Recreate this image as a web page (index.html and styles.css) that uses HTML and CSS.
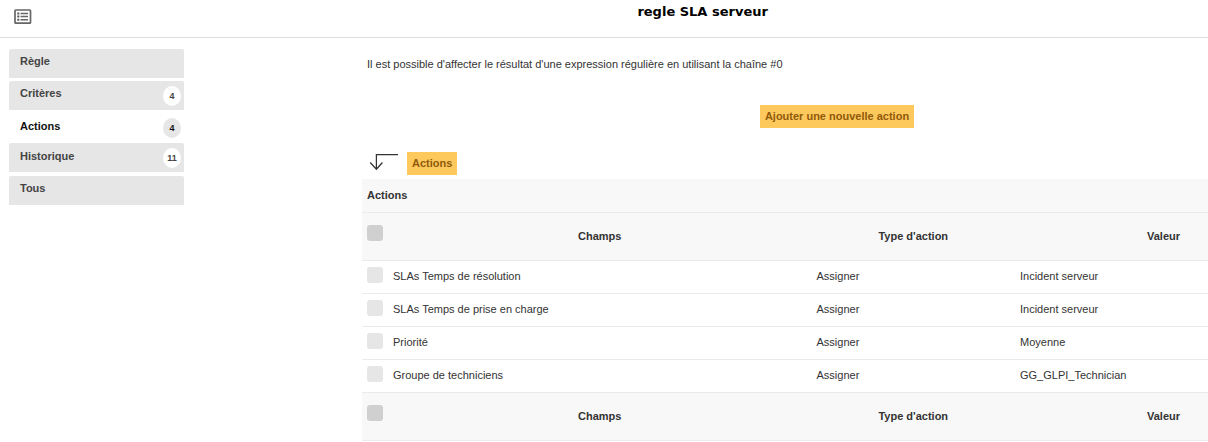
FILE: index.html
```html
<!DOCTYPE html>
<html lang="fr">
<head>
<meta charset="utf-8">
<title>regle SLA serveur</title>
<link rel="stylesheet" href="styles.css">
</head>
<body>
<header class="topbar">
  <svg class="list-icon" width="18" height="16" viewBox="0 0 18 16">
    <rect x="1" y="1" width="15.5" height="13.2" rx="0.8" fill="none" stroke="#666" stroke-width="1.7"/>
    <path d="M3.3 4.5h2M3.3 7.6h2M3.3 10.7h2" stroke="#555" stroke-width="2"/>
    <path d="M6.5 4.5h7.5M6.5 7.6h7.5M6.5 10.7h7.5" stroke="#666" stroke-width="1.5"/>
  </svg>
  <h1 class="title">regle SLA serveur</h1>
</header>
<main class="layout">
  <nav class="tabs">
    <a class="tab">Règle</a>
    <a class="tab">Critères<span class="badge">4</span></a>
    <a class="tab tab-active">Actions<span class="badge">4</span></a>
    <a class="tab"><span class="tab-low">Historique</span><span class="badge">11</span></a>
    <a class="tab tab-last">Tous</a>
  </nav>
  <section class="content">
    <p class="hint">Il est possible d'affecter le résultat d'une expression régulière en utilisant la chaîne #0</p>
    <div class="add-row"><a class="button">Ajouter une nouvelle action</a></div>
    <div class="mass-row">
      <svg class="arrow" width="30" height="19" viewBox="0 0 30 19">
        <path d="M29 2.5H7.4V17M1.2 10.5L7.4 17.2L13.4 10.5" fill="none" stroke="#333" stroke-width="1.25"/>
      </svg>
      <a class="button">Actions</a>
    </div>
    <div class="table">
      <div class="caption">Actions</div>
      <div class="row head"><i class="check"></i><b>Champs</b><b>Type d'action</b><b>Valeur</b></div>
      <div class="row"><i class="check"></i><span>SLAs Temps de résolution</span><span>Assigner</span><span>Incident serveur</span></div>
      <div class="row"><i class="check"></i><span>SLAs Temps de prise en charge</span><span>Assigner</span><span>Incident serveur</span></div>
      <div class="row"><i class="check"></i><span>Priorité</span><span>Assigner</span><span>Moyenne</span></div>
      <div class="row"><i class="check"></i><span>Groupe de techniciens</span><span>Assigner</span><span>GG_GLPI_Technician</span></div>
      <div class="row head"><i class="check"></i><b>Champs</b><b>Type d'action</b><b>Valeur</b></div>
    </div>
  </section>
</main>
</body>
</html>
```
FILE: styles.css
```css
* { box-sizing: border-box; }
html, body { height: 100%; }
body {
  margin: 0;
  overflow: hidden;
  background: #fff;
  color: #333;
  font: 11px/14px "Liberation Sans", Arial, sans-serif;
}
.topbar {
  display: flex;
  align-items: flex-start;
  height: 38px;
  padding-left: 14px;
  border-bottom: 1px solid #ddd;
}
.list-icon { margin-top: 9px; }
.title {
  margin: 4px 0 0 605.4px;
  color: #000;
  font: bold 13px/16px "DejaVu Sans", sans-serif;
  white-space: nowrap;
}
.layout { display: flex; }
.tabs {
  display: flex;
  flex: none;
  flex-direction: column;
  width: 175px;
  margin: 11px 0 0 9px;
}
.tab {
  display: flex;
  justify-content: space-between;
  height: 29px;
  margin-bottom: 3px;
  padding: 5px 3px 0 11px;
  border-radius: 2px 2px 0 0;
  background: #e6e6e6;
  color: #444;
  font-weight: bold;
}
.tab-active {
  margin-bottom: 1px;
  padding-top: 6px;
  background: #fff;
  color: #111;
}
.tab-low { padding-top: 1px; }
.tab-last { margin-top: 1px; }
.badge {
  width: 18px;
  height: 20px;
  border-radius: 50%;
  background: #fff;
  font-size: 9px;
  line-height: 20px;
  text-align: center;
}
.tab-active .badge { margin-top: -1px; background: #e6e6e6; }
.content {
  flex: none;
  width: 950px;
  margin-left: 178px;
}
.hint { margin: 19px 0 0 5px; white-space: nowrap; }
.add-row {
  display: flex;
  justify-content: center;
  margin-top: 34px;
}
.button {
  height: 23px;
  padding: 0 5px;
  background: #fec95c;
  color: #8f5a0a;
  font-weight: bold;
  line-height: 23px;
}
.mass-row {
  display: flex;
  align-items: flex-start;
  margin: 24px 0 4px 7px;
}
.arrow { margin-right: 8px; }
.caption {
  height: 34px;
  padding: 9px 5px;
  border-bottom: 1px solid #ebebeb;
  background: #f8f8f8;
  font-weight: bold;
}
.row {
  display: grid;
  grid-template-columns: 26px 423.5px 203.5px 297px;
  height: 33px;
  border-bottom: 1px solid #ebebeb;
  line-height: 30px;
}
.row span { padding-left: 5px; }
.row b { text-align: center; }
.check {
  width: 16px;
  height: 16px;
  margin: 6px 0 0 5px;
  border-radius: 3px;
  background: #e6e6e6;
}
.head {
  height: 48px;
  background: #f8f8f8;
  line-height: 47px;
}
.head .check { margin-top: 12px; background: #d0d0d0; }
```
